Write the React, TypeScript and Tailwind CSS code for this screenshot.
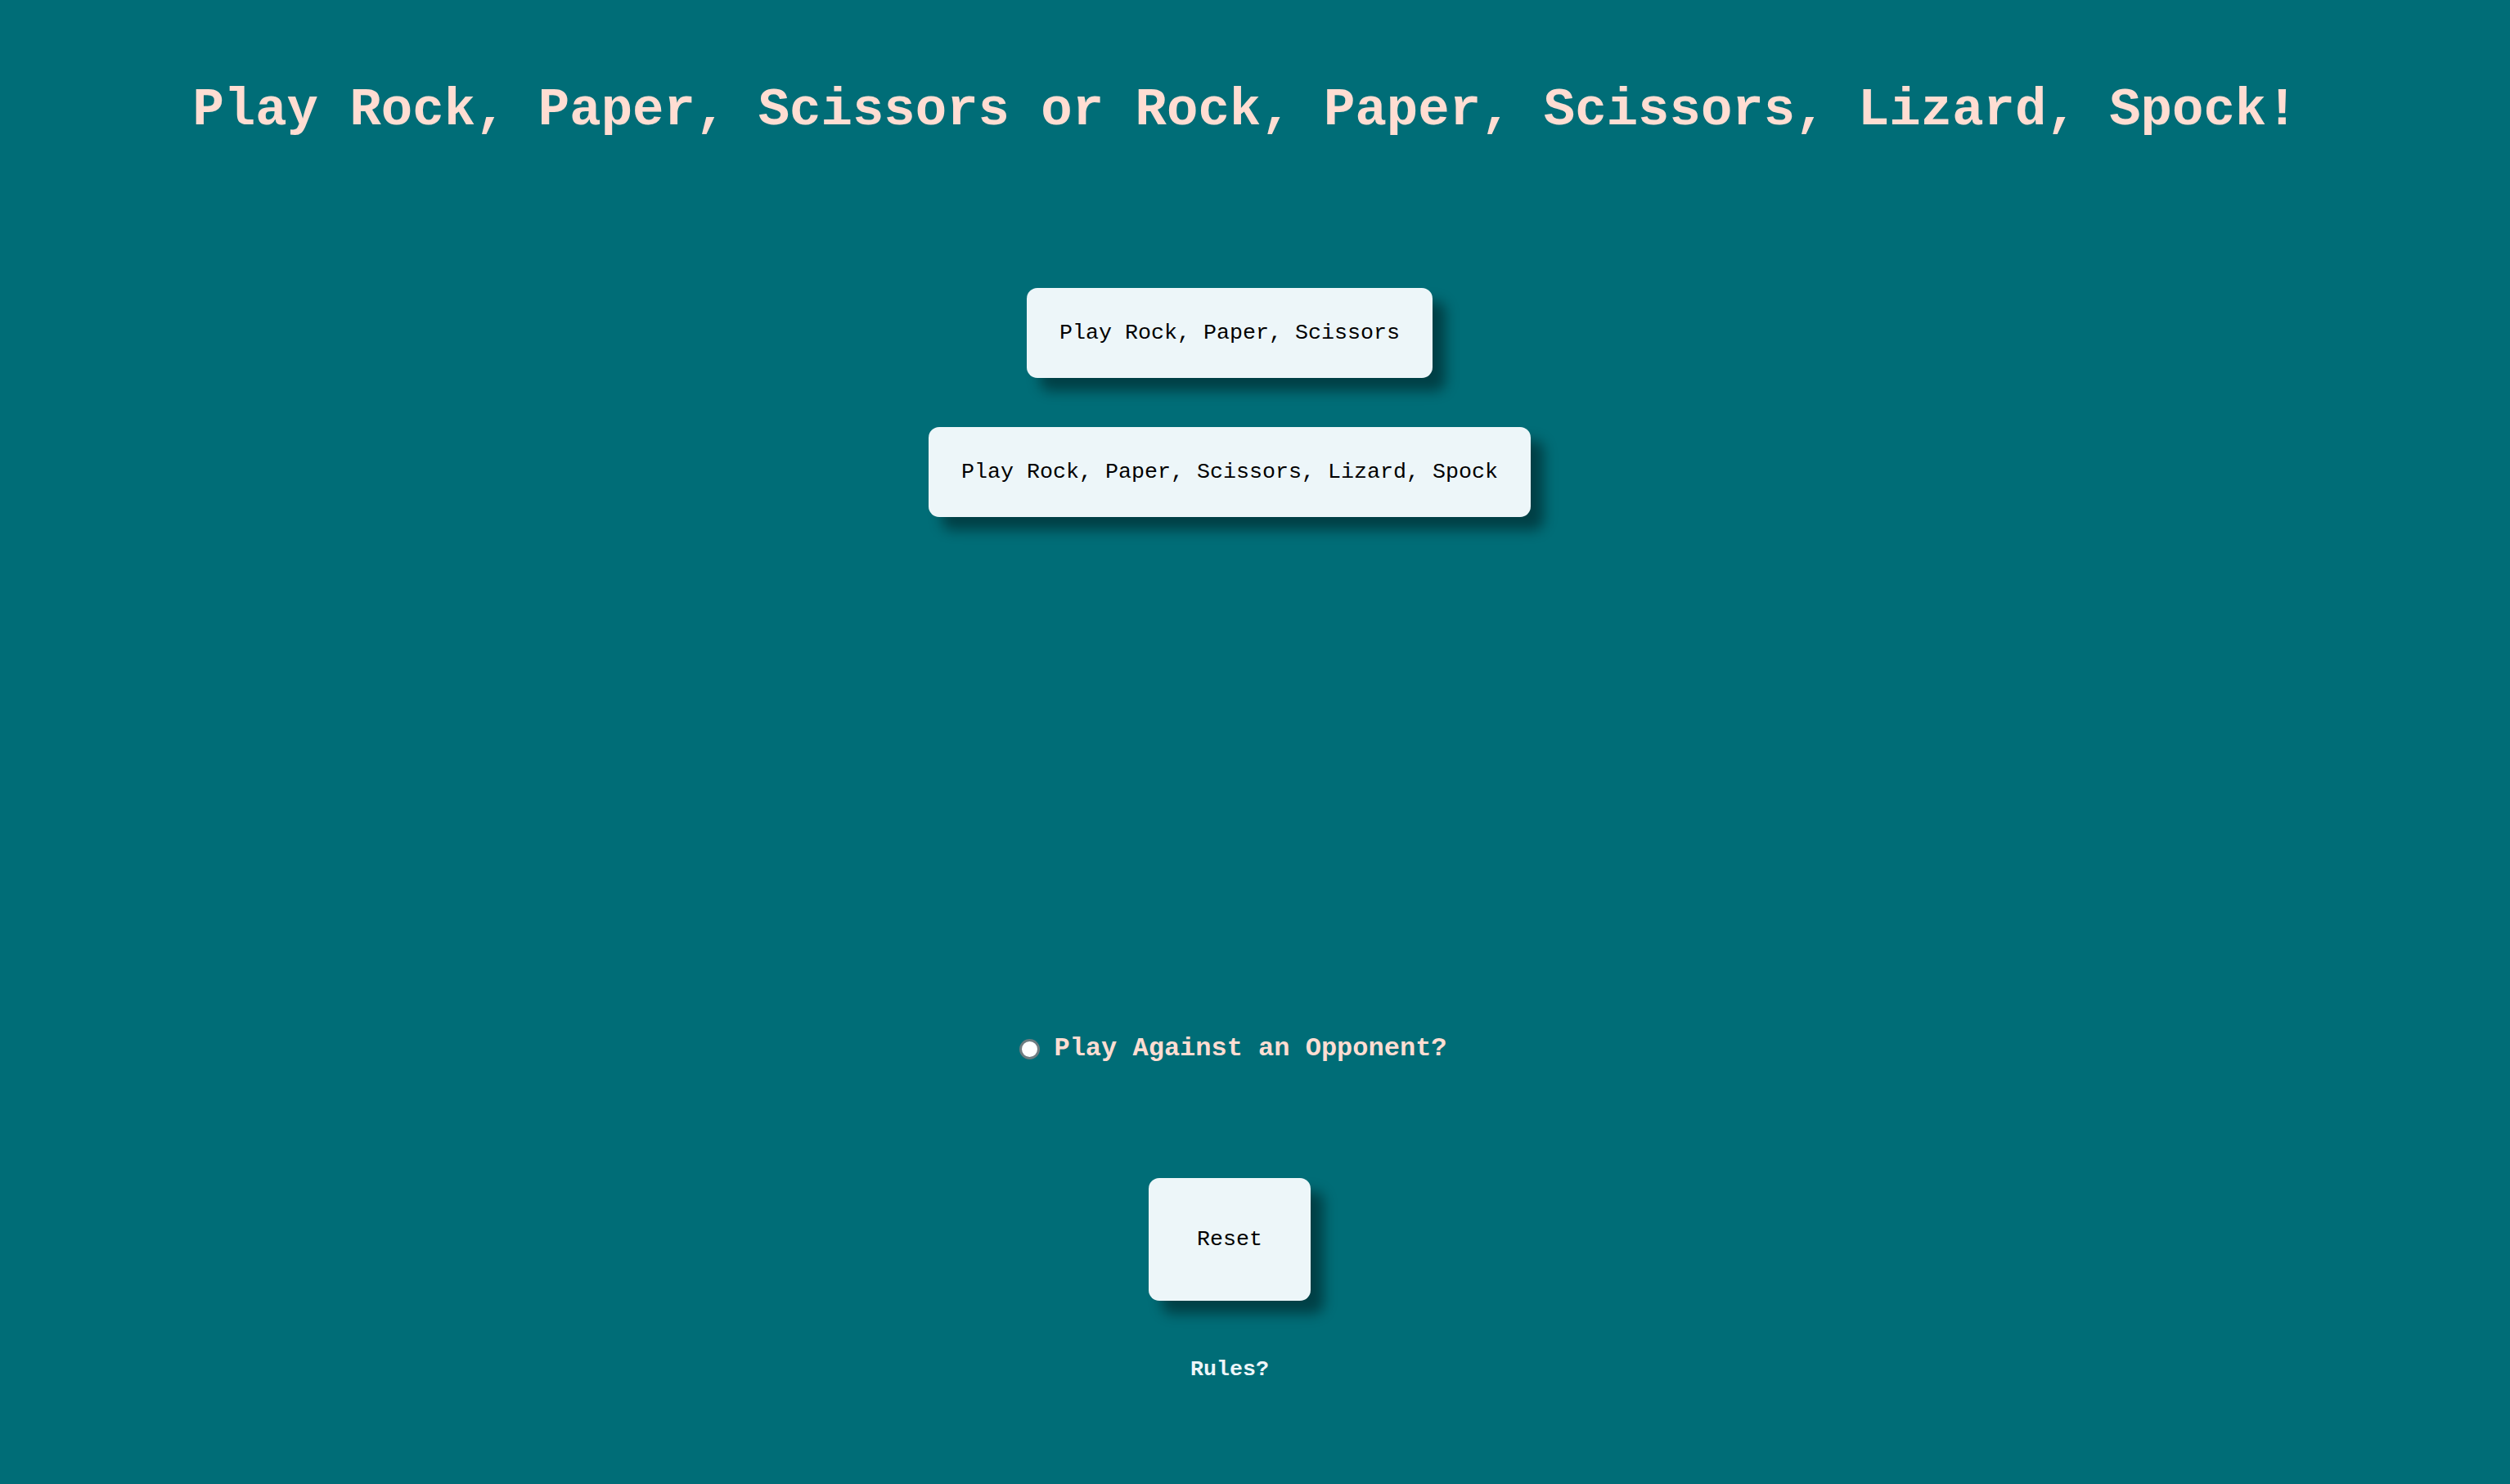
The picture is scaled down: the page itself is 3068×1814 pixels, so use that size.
import React from 'react';

const mono = "font-['Liberation_Mono','Courier_New',monospace]";

const btn =
  'bg-[#edf6f9] text-black rounded-[13px] shadow-[16px_16px_16px_rgba(0,0,0,0.42)] text-[26.67px] leading-[30px] cursor-pointer';

export default function App() {
  return (
    <div className={`min-h-screen bg-[#006d77] ${mono} pb-[126px]`}>
      <h1 className="pt-[99px] pr-[24px] text-center text-[64px] leading-[72px] font-bold text-[#ffddd2]">
        Play Rock, Paper, Scissors or Rock, Paper, Scissors, Lizard, Spock!
      </h1>

      <div className="flex flex-col items-center pr-[62px]">
        <div className="mt-[181px] flex flex-col items-center gap-[60px]">
          <button className={`${btn} px-[40px] py-[40px]`}>Play Rock, Paper, Scissors</button>
          <button className={`${btn} px-[40px] py-[40px]`}>Play Rock, Paper, Scissors, Lizard, Spock</button>
        </div>

        <div className="h-[632px]" />

        <label className="flex items-center gap-[17px] pl-[9px] text-[32px] leading-[36px] font-bold text-[#ffddd2]">
          <input
            type="radio"
            className="appearance-none w-[25px] h-[25px] rounded-full bg-white border-[3px] border-[#6f7c80]"
          />
          Play Against an Opponent?
        </label>

        <button className={`${btn} mt-[140px] px-[59px] py-[60px]`}>Reset</button>

        <p className="mt-[69px] text-[26.67px] leading-[30px] font-bold text-[#edf6f9]">Rules?</p>
      </div>
    </div>
  );
}
